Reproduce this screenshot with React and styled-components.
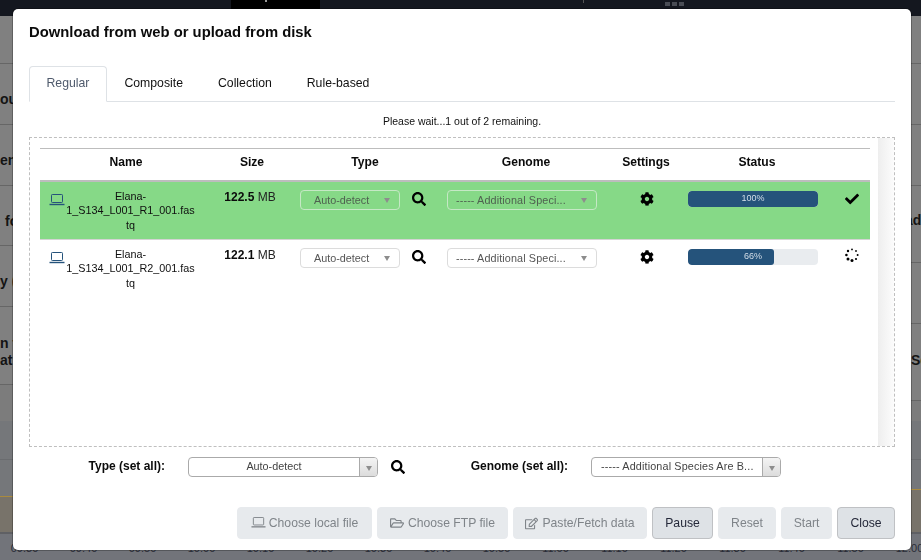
import React from "react";
import styled, { createGlobalStyle } from "styled-components";
import {
  FaSearch,
  FaCog,
  FaCheck,
  FaRegFolderOpen,
  FaRegEdit,
} from "react-icons/fa";

const GlobalStyle = createGlobalStyle`
  html, body {
    margin: 0;
    padding: 0;
    height: 100%;
    overflow: hidden;
    background: #808080;
    font-family: "Liberation Sans", Arial, sans-serif;
    color: #000;
  }
  * { box-sizing: border-box; }
`;

const columns = "172px 80px 146px 176px 64px 158px 34px";

const LaptopIcon = ({ size = 16 }) => (
  <svg width={size} height={size * 0.75} viewBox="0 0 16 12" fill="none" stroke="currentColor">
    <rect x="2.5" y="0.5" width="11" height="8" rx="0.8" />
    <path d="M0.5 10.5h15" strokeWidth="1.4" />
  </svg>
);

const SpinnerIcon = () => (
  <svg width="14" height="14" viewBox="0 0 14 14" fill="#000">
    <circle cx="7" cy="1.4" r="0.9" />
    <circle cx="11" cy="3" r="0.9" />
    <circle cx="12.6" cy="7" r="1" />
    <circle cx="11" cy="11" r="1.1" />
    <circle cx="7" cy="12.4" r="1.5" />
    <circle cx="3" cy="11" r="1.5" />
    <circle cx="1.4" cy="7" r="1.3" />
    <circle cx="3" cy="3" r="1.2" />
  </svg>
);

const Page = styled.div`
  height: 560px;
  width: 921px;
  display: flex;
  flex-direction: column;
  overflow: hidden;
`;

const TopBar = styled.div`
  height: 16px;
  flex: none;
  background: #14171f;
  display: flex;
`;

const ActiveTab = styled.div`
  width: 89px;
  margin-left: 231px;
  padding-left: 34px;
  background: #000;
  &::after {
    content: "";
    display: block;
    width: 2px;
    height: 2px;
    background: #999;
  }
`;

const BarTick = styled.span`
  width: 1px;
  height: 3px;
  margin-left: 263px;
  background: #555;
`;

const Dots = styled.div`
  margin-left: 81px;
  margin-top: 2px;
  display: flex;
  gap: 2px;
  height: 4px;
`;

const Dot = styled.span`
  width: 5px;
  height: 4px;
  background: #4a4d55;
`;

const Middle = styled.div`
  flex: 1;
  display: flex;
  justify-content: space-between;
  min-height: 0;
`;

const Gutter = styled.div`
  width: ${(p) => p.$width}px;
  display: flex;
  flex-direction: column;
`;

const BackRow = styled.div`
  height: ${(p) => p.$height}px;
  flex: none;
  border-bottom: 1px solid #666;
  padding-top: ${(p) => p.$top || 0}px;
  padding-bottom: ${(p) => p.$bottom || 0}px;
  text-indent: ${(p) => p.$indent || 0}px;
  display: flex;
  flex-direction: column;
  justify-content: center;
  overflow: hidden;
  font-size: 14px;
  font-weight: 700;
  line-height: 17px;
  color: #141414;
  white-space: nowrap;
`;

const ChartBand = styled.div`
  flex: 1;
  display: flex;
  flex-direction: column;
`;

const ChartGap = styled.div`
  height: ${(p) => p.$height}px;
  flex: none;
  background: ${(p) => p.$bg};
  border-top: 1px solid ${(p) => p.$line || p.$bg};
`;

const ChartFill = styled.div`
  flex: 1;
  background: #78736a;
  border-top: 1px solid #a98a3e;
`;

const Axis = styled.div`
  height: 28px;
  flex: none;
  display: flex;
  align-items: flex-end;
  padding-bottom: 5px;
  margin-left: -5px;
  border-top: 2px solid #5f6064;
  background: #72747a;
`;

const Tick = styled.span`
  width: 59px;
  flex: none;
  text-align: center;
  font-size: 11px;
  line-height: 13px;
  color: #2a2d38;
`;

const Modal = styled.div`
  position: fixed;
  left: 13px;
  top: 9px;
  width: 898px;
  height: 541px;
  background: #fff;
  border-radius: 5px;
  box-shadow: 0 0 0 1px rgba(0, 0, 0, 0.25);
  padding: 0 16px;
  display: flex;
  flex-direction: column;
`;

const Title = styled.h1`
  margin: 0;
  height: 57px;
  padding-top: 14px;
  font-size: 14.8px;
  line-height: 18px;
  font-weight: 700;
  color: #0b0b0b;
`;

const Tabs = styled.div`
  display: flex;
  height: 36px;
  border-bottom: 1px solid #dee2e6;
`;

const Tab = styled.div`
  height: 36px;
  padding: 0 16.5px;
  font-size: 12.25px;
  line-height: 33px;
  color: ${(p) => (p.$active ? "#4f5a6c" : "#111")};
  border: 1px solid ${(p) => (p.$active ? "#dee2e6" : "transparent")};
  border-bottom-color: ${(p) => (p.$active ? "#fff" : "transparent")};
  border-radius: 4px 4px 0 0;
`;

const Notice = styled.div`
  height: 35px;
  padding-top: 13px;
  text-align: center;
  font-size: 10.5px;
  line-height: 12px;
  color: #111;
`;

const DropBox = styled.div`
  height: 310px;
  border: 1px dashed #bfbfbf;
  display: flex;
  padding: 10px 0 0 10px;
`;

const TableArea = styled.div`
  width: 830px;
  flex: none;
`;

const ScrollTrack = styled.div`
  width: 16px;
  margin: -10px 0 0 auto;
  background: linear-gradient(to right, #eeeeee, #fcfcfc);
`;

const Row = styled.div`
  display: grid;
  grid-template-columns: ${columns};
  height: 58px;
  background: ${(p) => (p.$done ? "#86d987" : "transparent")};
  border-bottom: 1px solid ${(p) => (p.$done ? "#d4d4d4" : "transparent")};
`;

const HeadRow = styled(Row)`
  height: 34px;
  border-top: 1px solid #bdbdbd;
  border-bottom: 2px solid #bdbdbd;
`;

const HeadCell = styled.div`
  font-size: 12.1px;
  font-weight: 700;
  text-align: center;
  line-height: 14px;
  padding-top: 6px;
  color: #0b0b0b;
`;

const Cell = styled.div`
  padding: ${(p) => p.$top || 7}px ${(p) => p.$right || 0}px 0 ${(p) => p.$left || 0}px;
  display: flex;
  justify-content: center;
`;

const NameCell = styled.div`
  display: flex;
  padding: 7px 17px 0 9px;
`;

const LaptopSlot = styled.span`
  color: #25537b;
  width: 17px;
  flex: none;
  padding-top: 5px;
  line-height: 0;
`;

const FileName = styled.div`
  flex: 1;
  text-align: center;
  font-size: 10.8px;
  line-height: 14.4px;
  overflow-wrap: anywhere;
  color: #0f0f0f;
`;

const Size = styled.div`
  padding: 8px 4px 0 0;
  text-align: center;
  font-size: 12px;
  line-height: 15px;
  color: #222;
  b {
    color: #0b0b0b;
  }
`;

const TypeCell = styled.div`
  display: flex;
  align-items: flex-start;
  padding: 8px 0 0 ${(p) => p.$left}px;
  gap: 12px;
`;

const SelectBox = styled.div`
  width: ${(p) => p.$width}px;
  height: 20px;
  flex: none;
  display: flex;
  align-items: center;
  justify-content: space-between;
  padding: 0 9px 1px ${(p) => p.$pad}px;
  border: 1px solid ${(p) => (p.$dim ? "#c5e8c5" : "#dcdcdc")};
  border-radius: 4px;
  font-size: 10.8px;
  letter-spacing: ${(p) => p.$track || 0}px;
  color: ${(p) => (p.$dim ? "#4f6150" : "#555")};
  white-space: nowrap;
`;

const Caret = styled.span`
  width: 0;
  height: 0;
  flex: none;
  margin-top: 2px;
  border-left: 3.5px solid transparent;
  border-right: 3.5px solid transparent;
  border-top: 5px solid #8d8d8d;
`;

const IconSlot = styled.span`
  padding-top: ${(p) => p.$top ?? 3}px;
  font-size: 14px;
  line-height: 0;
  color: #000;
`;

const SetAllIcon = styled(IconSlot)`
  margin-left: 13px;
`;

const ProgressCell = styled.div`
  padding: 9px 18px 0 10px;
`;

const Track = styled.div`
  height: 16px;
  background: #e9ecef;
  border-radius: 4px;
  position: relative;
  overflow: hidden;
`;

const Fill = styled.div`
  height: 100%;
  background: #25537b;
  border-radius: 3px;
`;

const Percent = styled.span`
  position: absolute;
  inset: 0;
  text-align: center;
  font-size: 9px;
  line-height: 15px;
  color: #d4dee8;
`;

const SetAll = styled.div`
  display: flex;
  align-items: flex-start;
  height: 60px;
  padding-top: 10px;
`;

const SetLabel = styled.div`
  width: ${(p) => p.$width}px;
  flex: none;
  font-size: 12px;
  font-weight: 700;
  line-height: 18px;
  text-align: right;
  color: #0b0b0b;
`;

const Combo = styled.div`
  width: 190px;
  height: 20px;
  margin-left: 23px;
  flex: none;
  display: flex;
  border: 1px solid #aaa;
  border-radius: 4px;
  overflow: hidden;
  font-size: 10.8px;
  color: #444;
`;

const ComboText = styled.div`
  flex: 1;
  min-width: 0;
  text-align: ${(p) => p.$align || "center"};
  padding-left: ${(p) => p.$pad || 0}px;
  letter-spacing: ${(p) => p.$track || 0}px;
  line-height: 17px;
  white-space: nowrap;
`;

const ComboArrow = styled.div`
  width: 18px;
  flex: none;
  display: flex;
  align-items: center;
  justify-content: center;
  background: linear-gradient(#f4f4f4, #dcdcdc);
  border-left: 1px solid #aaa;
`;

const Footer = styled.div`
  display: flex;
  justify-content: flex-end;
  gap: 5px;
`;

const Button = styled.div`
  height: 32px;
  width: ${(p) => p.$width}px;
  display: flex;
  align-items: center;
  justify-content: center;
  gap: ${(p) => p.$gap || 4}px;
  font-size: 12.2px;
  border-radius: 4px;
  background: ${(p) => (p.$active ? "#dee2e6" : "#e7eaed")};
  border: 1px solid ${(p) => (p.$active ? "#bfc1c4" : "#e7eaed")};
  color: ${(p) => (p.$active ? "#25293a" : "#7f8489")};
`;

const uploads = [
  {
    name: "Elana-1_S134_L001_R1_001.fastq",
    size: "122.5",
    percent: 100,
    done: true,
  },
  {
    name: "Elana-1_S134_L001_R2_001.fastq",
    size: "122.1",
    percent: 66,
    done: false,
  },
];

const leftRows = [
  { height: 48 },
  { height: 61, top: 11, text: ["ou"] },
  { height: 61, top: 11, text: ["en"] },
  { height: 60, top: 12, indent: 5, text: ["fo"] },
  { height: 61, top: 11, text: ["y ("] },
  { height: 78, top: 13, text: ["n t", "at"] },
];

const rightRows = [
  { height: 48 },
  { height: 61 },
  { height: 61 },
  { height: 77, indent: -6, bottom: 8, text: ["ad"] },
  { height: 61 },
  { height: 77, bottom: 4, text: ["Se"] },
];

const times = [
  "09:30", "09:40", "09:50", "10:00", "10:10", "10:20", "10:30", "10:40",
  "10:50", "11:00", "11:10", "11:20", "11:30", "11:40", "11:50", "12:00",
];

const App = () => {
  return (
    <Page>
      <GlobalStyle />
      <TopBar>
        <ActiveTab />
        <BarTick />
        <Dots>
          <Dot />
          <Dot />
          <Dot />
        </Dots>
      </TopBar>
      <Middle>
        <Gutter $width={13}>
          {leftRows.map((row, i) => (
            <BackRow key={i} $height={row.height} $top={row.top} $indent={row.indent}>
              {row.text && row.text.map((t) => <span key={t}>{t}</span>)}
            </BackRow>
          ))}
          <ChartBand>
            <ChartGap $height={36} $bg="#7c7c7c" />
            <ChartGap $height={38} $bg="#75777a" />
            <ChartGap $height={37} $bg="#75777a" $line="#6a6c6f" />
            <ChartFill />
          </ChartBand>
        </Gutter>
        <Gutter $width={10}>
          {rightRows.map((row, i) => (
            <BackRow key={i} $height={row.height} $bottom={row.bottom} $indent={row.indent}>
              {row.text && row.text.map((t) => <span key={t}>{t}</span>)}
            </BackRow>
          ))}
          <ChartBand>
            <ChartGap $height={20} $bg="#7c7c7c" />
            <ChartGap $height={38} $bg="#75777a" />
            <ChartGap $height={30} $bg="#75777a" $line="#6a6c6f" />
            <ChartFill />
          </ChartBand>
        </Gutter>
      </Middle>
      <Axis>
        {times.map((t) => (
          <Tick key={t}>{t}</Tick>
        ))}
      </Axis>

      <Modal>
        <Title>Download from web or upload from disk</Title>
        <Tabs>
          <Tab $active>Regular</Tab>
          <Tab>Composite</Tab>
          <Tab>Collection</Tab>
          <Tab>Rule-based</Tab>
        </Tabs>
        <Notice>Please wait...1 out of 2 remaining.</Notice>
        <DropBox>
          <TableArea>
            <HeadRow>
              <HeadCell>Name</HeadCell>
              <HeadCell>Size</HeadCell>
              <HeadCell>Type</HeadCell>
              <HeadCell>Genome</HeadCell>
              <HeadCell>Settings</HeadCell>
              <HeadCell>Status</HeadCell>
              <HeadCell />
            </HeadRow>
            {uploads.map((file) => (
              <Row key={file.name} $done={file.done}>
                <NameCell>
                  <LaptopSlot>
                    <LaptopIcon />
                  </LaptopSlot>
                  <FileName>{file.name}</FileName>
                </NameCell>
                <Size>
                  <b>{file.size}</b> MB
                </Size>
                <TypeCell $left={8}>
                  <SelectBox $width={100} $pad={13} $dim={file.done}>
                    Auto-detect
                    <Caret />
                  </SelectBox>
                  <IconSlot $top={2}>
                    <FaSearch />
                  </IconSlot>
                </TypeCell>
                <TypeCell $left={9}>
                  <SelectBox $width={150} $pad={8} $track={0.12} $dim={file.done}>
                    ----- Additional Speci...
                    <Caret />
                  </SelectBox>
                </TypeCell>
                <Cell $left={2}>
                  <IconSlot>
                    <FaCog />
                  </IconSlot>
                </Cell>
                <ProgressCell>
                  <Track>
                    <Fill style={{ width: `${file.percent}%` }} />
                    <Percent>{file.percent}%</Percent>
                  </Track>
                </ProgressCell>
                <Cell $right={3} $top={file.done ? 7 : 8}>
                  {file.done ? (
                    <IconSlot>
                      <FaCheck />
                    </IconSlot>
                  ) : (
                    <SpinnerIcon />
                  )}
                </Cell>
              </Row>
            ))}
          </TableArea>
          <ScrollTrack />
        </DropBox>
        <SetAll>
          <SetLabel $width={136}>Type (set all):</SetLabel>
          <Combo>
            <ComboText>Auto-detect</ComboText>
            <ComboArrow>
              <Caret />
            </ComboArrow>
          </Combo>
          <SetAllIcon>
            <FaSearch />
          </SetAllIcon>
          <SetLabel $width={163}>Genome (set all):</SetLabel>
          <Combo>
            <ComboText $align="left" $pad={9} $track={0.15}>
              ----- Additional Species Are B...
            </ComboText>
            <ComboArrow>
              <Caret />
            </ComboArrow>
          </Combo>
        </SetAll>
        <Footer>
          <Button $width={135} $gap={3}>
            <LaptopIcon size={15} /> Choose local file
          </Button>
          <Button $width={131}>
            <FaRegFolderOpen size={14} /> Choose FTP file
          </Button>
          <Button $width={134}>
            <FaRegEdit size={13} /> Paste/Fetch data
          </Button>
          <Button $width={61} $active>
            Pause
          </Button>
          <Button $width={58}>Reset</Button>
          <Button $width={51}>Start</Button>
          <Button $width={58} $active>
            Close
          </Button>
        </Footer>
      </Modal>
    </Page>
  );
};

export default App;
